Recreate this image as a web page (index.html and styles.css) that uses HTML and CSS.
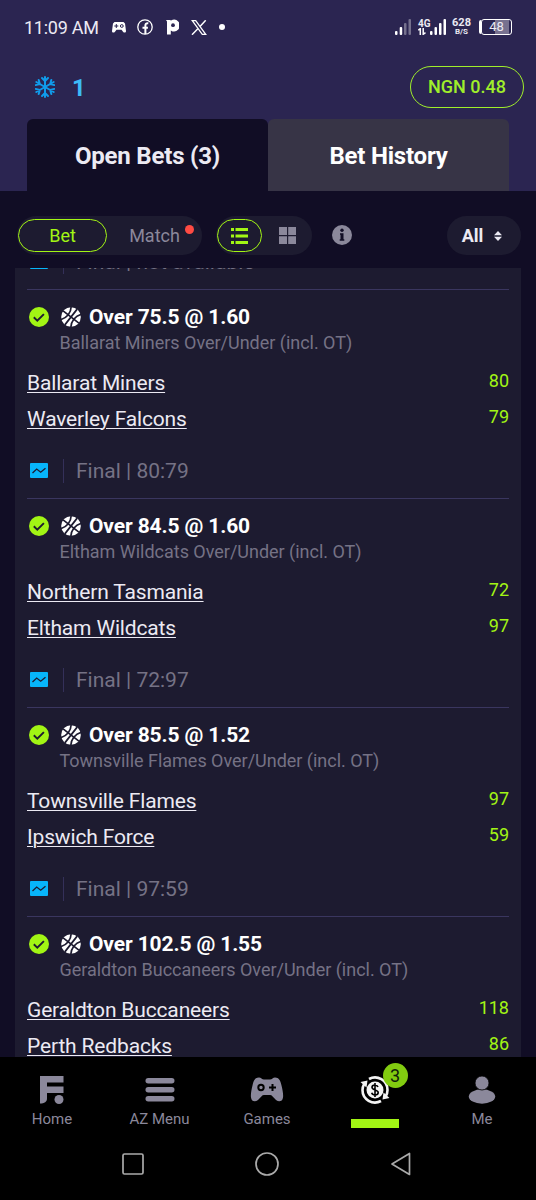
FILE: index.html
```html
<!DOCTYPE html>
<html lang="en">
<head>
  <meta charset="UTF-8" />
  <meta name="viewport" content="width=device-width, initial-scale=1" />
  <title>Open Bets</title>
  <link rel="stylesheet" href="styles.css">
</head>
<body>

<!-- Shared icons -->
<svg class="sprite">
  <symbol id="check" viewBox="0 0 20 20">
    <circle cx="10" cy="10" r="10" fill="#a2f514" />
    <path d="M4.8 10.3l3.5 3.4 6.6-6.6" fill="none" stroke="#1d1b30" stroke-width="1.9" />
  </symbol>
  <symbol id="ball" viewBox="0 0 20 20">
    <circle cx="10" cy="10" r="9.800" fill="#fff" />
    <g fill="none" stroke="#1d1b30" stroke-width="1.700" transform="rotate(38 10 10)">
      <path d="M10 0v20M0 10h20" />
      <path d="M3.500 1.500c4 5 4 12 0 17M16.500 1.500c-4 5-4 12 0 17" />
    </g>
  </symbol>
  <symbol id="chart" viewBox="0 0 18 15">
    <rect width="18" height="15" rx="1" fill="#07b5fa" />
    <path d="M2.500 10l4.200-4 4 3.200 4.800-4" fill="none" stroke="#1d1b30" stroke-width="1.300" />
  </symbol>
</svg>

<header class="top">
  <div class="status">
    <div class="status-left">
      <span class="clock">11:09 AM</span>
      <svg class="st-pad" width="14" height="11" viewBox="0 0 14 11">
        <path d="M2.500 0h9L13 1.500l1 7.500c0 2-2 2-3 .7L9.500 7.800h-5L3 9.700C2 11 0 11 0 9l1-7.500z" fill="#fff" />
        <path d="M4.300 2v4M2.300 4h4" stroke="#2b2551" />
        <circle cx="9.800" cy="4" r="1.400" fill="none" stroke="#2b2551" />
      </svg>
      <svg class="st-fb" width="16" height="16" viewBox="0 0 16 16" fill="none" stroke="#fff">
        <circle cx="8" cy="8" r="7.200" stroke-width="1.300" />
        <path d="M8.400 15V6.500c0-1.600.8-2.400 2.900-2.200M5.500 8.700h5.400" stroke-width="2" />
      </svg>
      <svg class="st-p" width="13" height="16" viewBox="0 0 13 16">
        <path d="M0 1h4l1 .6A5.800 5.800 0 1 1 4.800 11.400V15.500H1V2.500z" fill="#fff" />
        <circle cx="7" cy="6.200" r="1.900" fill="#2b2551" />
      </svg>
      <svg class="st-x" width="16" height="15" viewBox="0 0 16 15" fill="none" stroke="#fff">
        <path d="M1.300.7h3.400l10 13.600h-3.400z" stroke-width="1.300" />
        <path d="M14.700.3L9 6.500M6.800 8.700L1 14.700" stroke-width="1.500" />
      </svg>
      <span class="st-dot"></span>
    </div>
    <div class="status-right">
      <svg width="17" height="16" viewBox="0 0 17 16" fill="#fff">
        <rect x="0" y="12" width="2.500" height="4" rx="1" />
        <rect x="4.700" y="8" width="2.500" height="8" rx="1" />
        <rect x="9" y="4" width="2.500" height="12" rx="1" opacity=".35" />
        <rect x="13.500" y="0" width="2.500" height="16" rx="1" opacity=".35" />
      </svg>
      <div class="net">
        <span>4G</span>
        <svg width="8" height="7" viewBox="0 0 8 7" fill="none" stroke="#fff" stroke-width="1.500">
          <path d="M.3 2.300L2.300.6V7M7.500 4.700L5.200 6.300V0" />
        </svg>
      </div>
      <svg class="bars" width="16" height="16" viewBox="0 0 16 16" fill="#fff">
        <rect x="0" y="12" width="2.500" height="4" rx="1" />
        <rect x="4.500" y="8" width="2.500" height="8" rx="1" />
        <rect x="9" y="4" width="2.500" height="12" rx="1" />
        <rect x="13.500" y="0" width="2.500" height="16" rx="1" />
      </svg>
      <div class="speed"><b>628</b><span>B/S</span></div>
      <div class="battery">48</div>
    </div>
  </div>

  <div class="account">
    <div class="freeze">
      <svg width="20" height="22" viewBox="-10 -11 20 22" fill="none" stroke="#109bea" stroke-width="2" stroke-linecap="round">
        <g id="arm"><path d="M0-10V10M-3-9L0-6L3-9M-3 9L0 6L3 9" /></g>
        <use href="#arm" transform="rotate(60)" />
        <use href="#arm" transform="rotate(120)" />
      </svg>
      <span>1</span>
    </div>
    <div class="balance">NGN 0.48</div>
  </div>

  <nav class="tabs">
    <a class="tab active">Open Bets (3)</a>
    <a class="tab">Bet History</a>
  </nav>
</header>

<div class="toolbar">
  <div class="switch">
    <span class="option bet selected">Bet</span>
    <span class="option match">Match<i class="dot"></i></span>
  </div>
  <div class="switch views">
    <span class="option list selected">
      <svg width="17" height="16" viewBox="0 0 17 16" fill="#a2f514">
        <path d="M0 0h3v3H0zM4.500 0H17v3H4.500zM0 6.500h3v3H0zM4.500 6.500H17v3H4.500zM0 13h3v3H0zM4.500 13H17v3H4.500z" />
      </svg>
    </span>
    <span class="option grid">
      <svg width="17" height="17" viewBox="0 0 17 17" fill="#8b889b">
        <path d="M0 0h8v8H0zM9.200 0h7.800v8H9.200zM0 9.200h8V17H0zM9.200 9.200h7.800V17H9.200z" />
      </svg>
    </span>
  </div>
  <svg class="info" width="20" height="20" viewBox="0 0 20 20">
    <circle cx="10" cy="10" r="10" fill="#8b889b" />
    <circle cx="10" cy="5.300" r="1.700" fill="#110d25" />
    <path d="M8 8.300h3.500v6h.8v1.400H7.700v-1.400h.8V9.700H8z" fill="#110d25" />
  </svg>
  <div class="filter">
    All
    <svg width="8" height="10" viewBox="0 0 8 10" fill="#eceaf3"><path d="M4 0l4 4.200H0zM4 10l4-4.200H0z" /></svg>
  </div>
</div>

<main class="slip">
  <div class="result first">
    <svg width="18" height="15"><use href="#chart" /></svg>
    <span>Final | not available</span>
  </div>

  <section class="bet-item">
    <div class="pick">
      <svg width="20" height="20"><use href="#check" /></svg>
      <svg class="sport" width="20" height="20"><use href="#ball" /></svg>
      <h3>Over 75.5 @ 1.60</h3>
    </div>
    <p class="market">Ballarat Miners Over/Under (incl. OT)</p>
    <div class="team"><a>Ballarat Miners</a><span class="score">80</span></div>
    <div class="team"><a>Waverley Falcons</a><span class="score">79</span></div>
    <div class="result">
      <svg width="18" height="15"><use href="#chart" /></svg>
      <span>Final | 80:79</span>
    </div>
  </section>

  <section class="bet-item">
    <div class="pick">
      <svg width="20" height="20"><use href="#check" /></svg>
      <svg class="sport" width="20" height="20"><use href="#ball" /></svg>
      <h3>Over 84.5 @ 1.60</h3>
    </div>
    <p class="market">Eltham Wildcats Over/Under (incl. OT)</p>
    <div class="team"><a>Northern Tasmania</a><span class="score">72</span></div>
    <div class="team"><a>Eltham Wildcats</a><span class="score">97</span></div>
    <div class="result">
      <svg width="18" height="15"><use href="#chart" /></svg>
      <span>Final | 72:97</span>
    </div>
  </section>

  <section class="bet-item">
    <div class="pick">
      <svg width="20" height="20"><use href="#check" /></svg>
      <svg class="sport" width="20" height="20"><use href="#ball" /></svg>
      <h3>Over 85.5 @ 1.52</h3>
    </div>
    <p class="market">Townsville Flames Over/Under (incl. OT)</p>
    <div class="team"><a>Townsville Flames</a><span class="score">97</span></div>
    <div class="team"><a>Ipswich Force</a><span class="score">59</span></div>
    <div class="result">
      <svg width="18" height="15"><use href="#chart" /></svg>
      <span>Final | 97:59</span>
    </div>
  </section>

  <section class="bet-item">
    <div class="pick">
      <svg width="20" height="20"><use href="#check" /></svg>
      <svg class="sport" width="20" height="20"><use href="#ball" /></svg>
      <h3>Over 102.5 @ 1.55</h3>
    </div>
    <p class="market">Geraldton Buccaneers Over/Under (incl. OT)</p>
    <div class="team"><a>Geraldton Buccaneers</a><span class="score">118</span></div>
    <div class="team"><a>Perth Redbacks</a><span class="score">86</span></div>
  </section>
</main>

<nav class="bottom">
  <a class="item">
    <svg width="24" height="28" viewBox="0 0 24 28" fill="#8b889b">
      <path d="M0 0h23.500v6.500H7v4h16.500V17H7v5.500c0 3.500-2.500 5-7 5z" />
      <circle cx="19" cy="23.500" r="4.500" />
    </svg>
    Home
  </a>
  <a class="item">
    <svg width="30" height="28" viewBox="0 0 30 28" fill="#8b889b">
      <rect x=".5" y="2" width="29" height="5.500" rx="2.700" />
      <rect x=".5" y="11" width="29" height="5.500" rx="2.700" />
      <rect x=".5" y="20" width="29" height="5.500" rx="2.700" />
    </svg>
    AZ Menu
  </a>
  <a class="item">
    <svg width="34" height="28" viewBox="0 0 34 28">
      <path d="M9 1.500c2 0 3 2 5 2h6c2 0 3-2 5-2 4 0 5.500 3 6.500 8 1 4 2 9 1.500 12-.6 4-4 5-7 2.500-3-3-4-5-6-5h-6c-2 0-3 2-6 5-3 2.500-6.400 1.500-7-2.500-.5-3 .5-8 1.500-12 1-5 2.500-8 6.500-8z" fill="#8b889b" />
      <circle cx="11" cy="11.500" r="2.700" fill="none" stroke="#000" stroke-width="2" />
      <path d="M22.500 8v7M19 11.500h7" stroke="#000" stroke-width="2" />
    </svg>
    Games
  </a>
  <a class="item current">
    <div class="coin">
      <svg width="30" height="30" viewBox="-15 -15 30 30">
        <circle r="8.500" fill="#f4f4f4" />
        <path d="M3-3c-.6-1.500-1.700-2-3-2C-2-5-3-4-3-2.700-3 .7 3.200-.8 3.200 2.600 3.200 4 2 5 0 5c-1.700 0-2.900-.7-3.300-2.200M0-7V7" fill="none" stroke="#000" stroke-width="1.600" />
        <g fill="none" stroke="#f4f4f4" stroke-width="2.600">
          <path d="M-6-11A12.500 12.500 0 0 1 12.500 0" />
          <path d="M6 11A12.500 12.500 0 0 1-12.500 0" />
          <path d="M12.500 0A12.500 12.500 0 0 1 10.800 6.200M-12.500 0A12.500 12.500 0 0 1-10.800-6.200" />
        </g>
        <path d="M-14.500-8l7-1.500-1 7zM14.500 8l-7 1.500 1-7z" fill="#f4f4f4" />
      </svg>
      <span class="badge">3</span>
    </div>
    <i class="marker"></i>
  </a>
  <a class="item">
    <svg width="28" height="28" viewBox="0 0 28 28" fill="#8b889b">
      <ellipse cx="14" cy="20.500" rx="13.200" ry="7.200" />
      <circle cx="14" cy="7" r="7" stroke="#000" stroke-width=".8" />
    </svg>
    Me
  </a>
</nav>

<footer class="system">
  <svg width="22" height="22" viewBox="0 0 22 22"><rect x="1" y="1" width="20" height="20" rx="1.500" /></svg>
  <svg width="24" height="24" viewBox="0 0 24 24"><circle cx="12" cy="12" r="11" /></svg>
  <svg width="22" height="24" viewBox="0 0 22 24"><path d="M19.500 1.500v21L2 12z" stroke-linejoin="round" /></svg>
</footer>

</body>
</html>
```

FILE: styles.css
```css
* {
  box-sizing: border-box;
}
body {
  margin: 0;
  height: 1200px;
  display: flex;
  flex-direction: column;
  overflow: hidden;
  font-family: Roboto, sans-serif;
  color: #eceaf3;
  background: #110d25;
}
svg {
  display: block;
  flex: none;
}
.sprite {
  position: absolute;
  width: 0;
  height: 0;
}

/* Header */
.top {
  height: 191px;
  flex: none;
  background: #2b2551;
}
.status {
  height: 54px;
  padding: 0 24px;
  display: flex;
  justify-content: space-between;
}
.status-left, .status-right {
  display: flex;
  align-items: center;
}
.clock {
  width: 88px;
  font-size: 18px;
  letter-spacing: -0.25px;
  white-space: nowrap;
}
.st-fb {
  margin-left: 11px;
}
.st-p {
  margin-left: 13px;
}
.st-x {
  margin-left: 12px;
}
.st-dot {
  width: 6px;
  height: 6px;
  margin-left: 12px;
  border-radius: 50%;
  background: #fff;
}
.net {
  width: 12px;
  margin-left: 6px;
  font-size: 10px;
  font-weight: 700;
  line-height: 9px;
}
.speed {
  width: 19px;
  margin: 0 10px 0 6px;
  display: flex;
  flex-direction: column;
  align-items: center;
  font-size: 11px;
  line-height: 9px;
}
.speed span {
  font-size: 8px;
  font-weight: 700;
  line-height: 9px;
}
.battery {
  width: 31px;
  height: 16px;
  border: 1.5px solid #fff;
  border-radius: 3px;
  font-size: 13px;
  line-height: 14px;
  text-align: center;
  box-shadow: -3px 0 0 -1px #fff;
  background: linear-gradient(90deg, #2b2551 45%, #77718f 45%, #77718f 92%, #2b2551 92%);
}
.account {
  height: 65px;
  padding: 0 12px 0 35px;
  display: flex;
  justify-content: space-between;
  align-items: center;
}
.freeze {
  display: flex;
  align-items: center;
  gap: 17px;
  color: #3dbbf8;
  font-size: 24px;
  font-weight: 700;
  line-height: 24px;
}
.freeze span {
  padding-top: 2px;
}
.balance {
  width: 114px;
  height: 42px;
  border: 1.5px solid #a0ee2b;
  border-radius: 21px;
  color: #a0ee2b;
  font-size: 18px;
  font-weight: 500;
  line-height: 40px;
  text-align: center;
}
.tabs {
  display: flex;
  padding: 0 27px;
}
.tab {
  flex: 1;
  height: 72px;
  border-radius: 6px 6px 0 0;
  background: #373446;
  color: #fff;
  font-size: 24px;
  font-weight: 700;
  letter-spacing: -0.2px;
  line-height: 75px;
  text-align: center;
}
.tab.active {
  background: #110d25;
  color: #eceaf3;
}

/* Toolbar */
.toolbar {
  height: 77px;
  flex: none;
  padding: 25px 15px 0 17px;
  display: flex;
  align-items: flex-start;
}
.switch {
  width: 185px;
  height: 39px;
  padding-left: 1px;
  display: flex;
  align-items: center;
  border-radius: 20px;
  background: #1d1b30;
  font-size: 18px;
}
.option {
  height: 33px;
  display: flex;
  align-items: center;
  justify-content: center;
  color: #8b889b;
}
.option.selected {
  border: 1.5px solid #a2f514;
  border-radius: 17px;
  color: #a2f514;
}
.bet {
  width: 89px;
}
.match {
  position: relative;
  width: 95px;
}
.dot {
  position: absolute;
  top: 6px;
  right: 8px;
  width: 9px;
  height: 9px;
  border-radius: 50%;
  background: #ff4b43;
}
.views {
  width: 96px;
  margin-left: 14px;
}
.list {
  width: 45px;
}
.grid {
  width: 50px;
}
.info {
  margin: 9px 0 0 20px;
}
.filter {
  width: 74px;
  height: 39px;
  margin-left: auto;
  padding-right: 4px;
  display: flex;
  align-items: center;
  justify-content: center;
  gap: 11px;
  border-radius: 20px;
  background: #1d1b30;
  font-size: 18px;
  font-weight: 700;
}

/* Bet list */
.slip {
  height: 789px;
  flex: none;
  margin: 0 15px;
  padding: 0 12px;
  overflow: hidden;
  background: #1d1b30;
}
.bet-item {
  height: 209px;
  padding-top: 12px;
  border-top: 1px solid #3a365f;
}
.pick {
  height: 29px;
  padding-left: 2px;
  display: flex;
  align-items: center;
}
.sport {
  margin-left: 12px;
}
.pick h3 {
  margin: 0 0 0 8px;
  padding-top: 1px;
  color: #fff;
  font-size: 21px;
  letter-spacing: -0.12px;
  line-height: 28px;
}
.market {
  margin: 1px 0 11px 32.5px;
  color: #757285;
  font-size: 18px;
  letter-spacing: -0.02px;
  line-height: 22px;
  white-space: nowrap;
}
.team {
  height: 36px;
  display: flex;
  justify-content: space-between;
  font-size: 21px;
  letter-spacing: -0.16px;
  line-height: 36px;
}
.team a {
  text-decoration: underline;
  text-decoration-thickness: 1px;
  text-underline-offset: 2px;
}
.score {
  color: #a2f514;
  font-size: 18px;
  letter-spacing: 0;
  line-height: 31px;
}
.result {
  height: 54px;
  margin-top: 7px;
  padding-left: 3px;
  display: flex;
  align-items: center;
  color: #757285;
  font-size: 21px;
}
.result svg {
  margin-bottom: 2px;
}
.result span {
  margin-left: 15px;
  padding-left: 12px;
  border-left: 1px solid #343059;
  line-height: 24px;
}
.result.first {
  margin-top: -33px;
}

/* Bottom navigation */
.bottom {
  height: 83px;
  flex: none;
  padding: 19px 2px 0 0;
  display: grid;
  grid-template-columns: repeat(5, 107.5px);
  justify-content: center;
  background: #000;
}
.item {
  display: flex;
  flex-direction: column;
  align-items: center;
  gap: 7px;
  color: #8b889b;
  font-size: 15px;
  line-height: 17px;
}
.coin {
  position: relative;
  margin-top: -1px;
}
.badge {
  position: absolute;
  top: -12px;
  right: -18px;
  width: 25px;
  height: 25px;
  border-radius: 50%;
  background: #82cc10;
  color: #10200a;
  font-size: 18px;
  line-height: 26px;
  text-align: center;
}
.marker {
  width: 48px;
  height: 9px;
  margin-top: 7px;
  background: #a2f514;
}
.system {
  flex: 1;
  padding: 12px 2px 0 0;
  display: flex;
  justify-content: center;
  align-items: flex-start;
  gap: 111px;
  background: #000;
}
.system svg {
  fill: none;
  stroke: #aaa;
  stroke-width: 1.7;
}
.system svg:first-child {
  margin-top: 1px;
}
```
